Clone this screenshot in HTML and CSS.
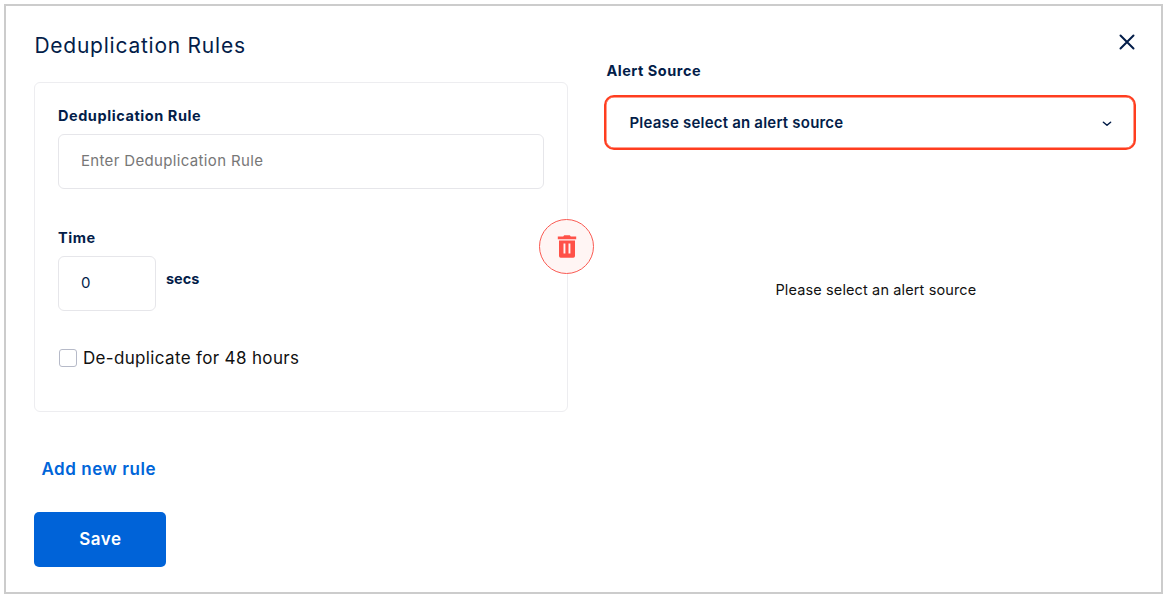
FILE: index.html
```html
<!DOCTYPE html>
<html lang="en">
<head>
<meta charset="utf-8">
<title>Deduplication Rules</title>
<link rel="stylesheet" href="styles.css">
</head>
<body>
<main class="modal">
  <section class="rules">
    <h1 class="title"><span>Deduplication Rules</span></h1>
    <div class="card">
      <label class="label" for="rule"><span class="rule-label">Deduplication Rule</span></label>
      <div class="field" id="rule"><span class="placeholder">Enter Deduplication Rule</span></div>
      <div class="label time-label"><span class="time-text">Time</span></div>
      <div class="time-row">
        <div class="field time-field"><span class="number">0</span></div>
        <span class="secs">secs</span>
      </div>
      <div class="check-row">
        <span class="checkbox"></span>
        <span class="check-text">De-duplicate for 48 hours</span>
      </div>
      <button class="delete" aria-label="Delete rule">
        <svg width="20" height="24" viewBox="0 0 20 24">
          <path d="M.8 1.4H6.2L7.2.2H12.8L13.8 1.4H19.2V4.2H.8Z" fill="#ff5148"/>
          <path fill-rule="evenodd" d="M2 5.4H18V21Q18 22.7 16.3 22.7H3.7Q2 22.7 2 21ZM6.5 8.5V18.6H8.4V8.5ZM11.5 8.5V18.6H13.4V8.5Z" fill="#ff5148"/>
        </svg>
      </button>
    </div>
    <a class="add"><span>Add new rule</span></a>
    <button class="save"><span>Save</span></button>
  </section>
  <section class="source">
    <div class="close-row">
      <svg width="16" height="16" viewBox="0 0 16 16"><path d="M1.5 1.5 14.5 14.5M14.5 1.5 1.5 14.5" stroke="#031d49" stroke-width="2" stroke-linecap="round"/></svg>
    </div>
    <div class="source-label"><span>Alert Source</span></div>
    <div class="select">
      <span class="select-text">Please select an alert source</span>
      <svg width="10" height="6" viewBox="0 0 10 6"><path d="M1.4 1.2 5 4.3 8.6 1.2" fill="none" stroke="#031d49" stroke-width="1.5" stroke-linecap="round" stroke-linejoin="round"/></svg>
    </div>
    <p class="empty"><span>Please select an alert source</span></p>
  </section>
</main>
</body>
</html>
```
FILE: styles.css
```css
* { box-sizing: border-box; }
body {
  margin: 0;
  background: #fff;
  color: #031d49;
  font-family: Inter, "Open Sans", sans-serif;
}
h1, p { margin: 0; }
button { font: inherit; padding: 0; border: 0; }
svg { display: block; }
span { white-space: nowrap; }
.modal {
  display: flex;
  gap: 36px;
  width: 1159px;
  height: 590px;
  margin: 4px 0 0 4.4px;
  padding: 26px 25px 0 28px;
  border: 2px solid #ccc;
}
.rules { width: 534px; }
.title { height: 50px; line-height: 27px; font-size: 21px; font-weight: 400; letter-spacing: .76px; }
.card {
  position: relative;
  height: 330px;
  padding: 22px 23px 0 22.5px;
  border: 1px solid #ededf0;
  border-radius: 6px;
}
.label { display: block; height: 29px; line-height: 22px; font-size: 14.5px; font-weight: 700; letter-spacing: .57px; }
.field {
  display: flex;
  align-items: center;
  height: 55px;
  padding: 0 0 2px 22px;
  border: 1px solid #e6e6ea;
  border-radius: 6px;
  font-size: 15px;
}
.placeholder { color: #777; letter-spacing: .35px; }
.time-label { margin-top: 38px; }
.time-row { display: flex; gap: 10px; }
.time-field { width: 98px; }
.secs { line-height: 22px; padding-top: 12px; font-size: 14.5px; font-weight: 700; }
.check-row { display: flex; align-items: center; gap: 6px; height: 22px; margin: 36px 0 0 1px; }
.checkbox { width: 18px; height: 18px; border: 1px solid #b6bac8; border-radius: 3px; }
.check-text { padding-bottom: 1px; color: #111; font-size: 17px; letter-spacing: .35px; }
.delete {
  position: absolute;
  top: 136px;
  right: -27px;
  display: flex;
  align-items: center;
  justify-content: center;
  width: 55px;
  height: 55px;
  border: 1px solid #fa5a52;
  border-radius: 50%;
  background: #fff5f4;
}
.add { display: block; margin: 44px 0 0 7px; line-height: 26px; font-size: 17px; font-weight: 600; letter-spacing: .55px; color: #0065d9; }
.save {
  display: block;
  width: 132px;
  height: 55px;
  margin-top: 30px;
  padding-bottom: 1px;
  border-radius: 5px;
  background: #0063d8;
  color: #fff;
  font-size: 17px;
  font-weight: 600;
  letter-spacing: .5px;
}
.source { width: 532px; }
.close-row { display: flex; justify-content: flex-end; padding: 2px 1.5px 0 0; height: 28px; }
.source-label { height: 35px; padding-left: 2px; line-height: 22px; font-size: 14.5px; font-weight: 700; letter-spacing: .52px; }
.select {
  display: flex;
  align-items: center;
  justify-content: space-between;
  height: 55px;
  padding: 0 22px 1px 23px;
  border: 2px solid #ff3d1f;
  border-radius: 10px;
  box-shadow: inset 0 0 0 .5px #ff3d1f;
}
.select svg { margin-top: 4px; }
.select-text { font-size: 15px; font-weight: 600; letter-spacing: .21px; }
.empty { margin-top: 129px; padding-left: 11px; line-height: 22px; text-align: center; font-size: 14.5px; letter-spacing: .13px; color: #111; }
```
